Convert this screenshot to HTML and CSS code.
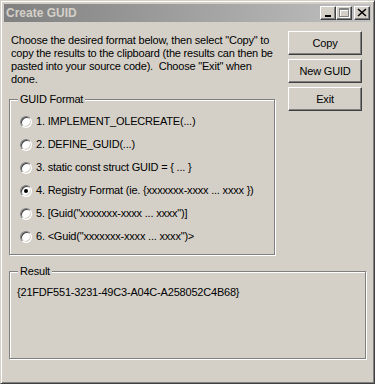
FILE: index.html
```html
<!DOCTYPE html>
<html lang="en">
<head>
    <meta charset="UTF-8">
    <meta name="viewport" content="width=device-width, initial-scale=1.0">
    <title>Create GUID</title>
    <link rel="stylesheet" href="styles.css">
</head>
<body>
    <div class="window">
        <div class="titlebar">
            <span class="title">Create GUID</span>
            <div class="title-buttons">
                <button class="tbtn" type="button">
                    <svg width="14" height="12" viewBox="0 0 14 12"><rect x="4" y="8" width="6" height="2" fill="#000"/></svg>
                </button>
                <button class="tbtn" type="button">
                    <svg width="14" height="12" viewBox="0 0 14 12">
                        <path d="M3.5 2.5h9v8h-9z M3 3.5h9" fill="none" stroke="#fff"/>
                        <path d="M2.5 1.5h9v8h-9z M2 2.5h9" fill="none" stroke="#808080"/>
                    </svg>
                </button>
                <button class="tbtn tbtn-close" type="button">
                    <svg width="14" height="12" viewBox="0 0 14 12"><path d="M3 2l8 7M11 2l-8 7" stroke="#000" stroke-width="1.6"/></svg>
                </button>
            </div>
        </div>

        <div class="client">
            <div class="top">
                <div class="left">
                    <p class="intro">
                        Choose the desired format below, then select "Copy" to<br>
                        copy the results to the clipboard (the results can then be<br>
                        pasted into your source code).&nbsp; Choose "Exit" when<br>
                        done.
                    </p>
                    <div class="group guid-group">
                        <span class="group-label">GUID Format</span>
                        <label class="radio-row"><span class="radio"></span>1. IMPLEMENT_OLECREATE(...)</label>
                        <label class="radio-row"><span class="radio"></span>2. DEFINE_GUID(...)</label>
                        <label class="radio-row"><span class="radio"></span>3. static const struct GUID = { ... }</label>
                        <label class="radio-row"><span class="radio checked"></span>4. Registry Format (ie. {xxxxxxx-xxxx ... xxxx })</label>
                        <label class="radio-row"><span class="radio"></span>5. [Guid("xxxxxxx-xxxx ... xxxx")]</label>
                        <label class="radio-row"><span class="radio"></span>6. &lt;Guid("xxxxxxx-xxxx ... xxxx")&gt;</label>
                    </div>
                </div>
                <div class="buttons">
                    <button class="btn" type="button">Copy</button>
                    <button class="btn" type="button">New GUID</button>
                    <button class="btn" type="button">Exit</button>
                </div>
            </div>

            <div class="group result-group">
                <span class="group-label">Result</span>
                <div class="result-text">{21FDF551-3231-49C3-A04C-A258052C4B68}</div>
            </div>
        </div>
    </div>
</body>
</html>
```

FILE: styles.css
```css
body {
    margin: 0;
    padding: 0;
    background-color: #d4d0c8;
    font-family: "Liberation Sans", Arial, sans-serif;
    font-size: 11px;
    line-height: 13px;
    letter-spacing: -0.2px;
    color: #000000;
}
.window {
    width: 375px;
    height: 384px;
    box-sizing: border-box;
    padding: 3px;
    background-color: #d4d0c8;
    border: 1px solid;
    border-color: #d4d0c8 #404040 #404040 #d4d0c8;
    box-shadow: inset 1px 1px 0 #ffffff, inset -1px -1px 0 #808080;
}
.titlebar {
    height: 18px;
    display: flex;
    align-items: center;
    padding-left: 2px;
    background: linear-gradient(to right, #808080, #c0c0c0);
}
.title {
    flex: 1;
    font-weight: bold;
    font-size: 12px;
    letter-spacing: 0;
    color: #d4d0c8;
}
.title-buttons {
    display: flex;
    margin-right: 1px;
}
.tbtn {
    width: 16px;
    height: 14px;
    padding: 0;
    display: flex;
    background-color: #d4d0c8;
    border: 1px solid;
    border-color: #ffffff #404040 #404040 #ffffff;
    box-shadow: inset -1px -1px 0 #808080;
}
.tbtn svg {
    display: block;
}
.tbtn-close {
    margin-left: 2px;
}
.client {
    padding-left: 5px;
}
.top {
    display: flex;
}
.left {
    width: 266px;
}
.intro {
    margin: 12px 0 0 2px;
    white-space: nowrap;
}
.group {
    position: relative;
    box-sizing: border-box;
    border: 1px solid #808080;
    box-shadow: 1px 1px 0 #ffffff, inset 1px 1px 0 #ffffff;
}
.group-label {
    position: absolute;
    top: -7px;
    left: 8px;
    padding: 0 2px;
    background-color: #d4d0c8;
}
.guid-group {
    margin-top: 13px;
    height: 156px;
    padding: 10px 0 0 10px;
}
.radio-row {
    height: 23px;
    display: flex;
    align-items: center;
    gap: 4px;
    white-space: nowrap;
}
.radio {
    position: relative;
    width: 12px;
    height: 12px;
    box-sizing: border-box;
    border-radius: 50%;
    border: 1px solid;
    border-color: #808080 #ffffff #ffffff #808080;
    background-color: #ffffff;
    box-shadow: inset 1px 1px 0 #404040, inset -1px -1px 0 #d4d0c8;
}
.radio.checked::after {
    content: "";
    position: absolute;
    top: 3px;
    left: 3px;
    width: 4px;
    height: 4px;
    border-radius: 50%;
    background-color: #000000;
}
.buttons {
    margin: 9px 0 0 13px;
    display: flex;
    flex-direction: column;
    gap: 4px;
}
.btn {
    width: 74px;
    height: 24px;
    padding: 0;
    font-family: inherit;
    font-size: 11px;
    letter-spacing: -0.2px;
    color: #000000;
    background-color: #d4d0c8;
    border: 1px solid;
    border-color: #ffffff #404040 #404040 #ffffff;
    box-shadow: inset -1px -1px 0 #808080;
}
.result-group {
    margin-top: 16px;
    width: 357px;
    height: 88px;
    padding: 14px 0 0 7px;
}
```
